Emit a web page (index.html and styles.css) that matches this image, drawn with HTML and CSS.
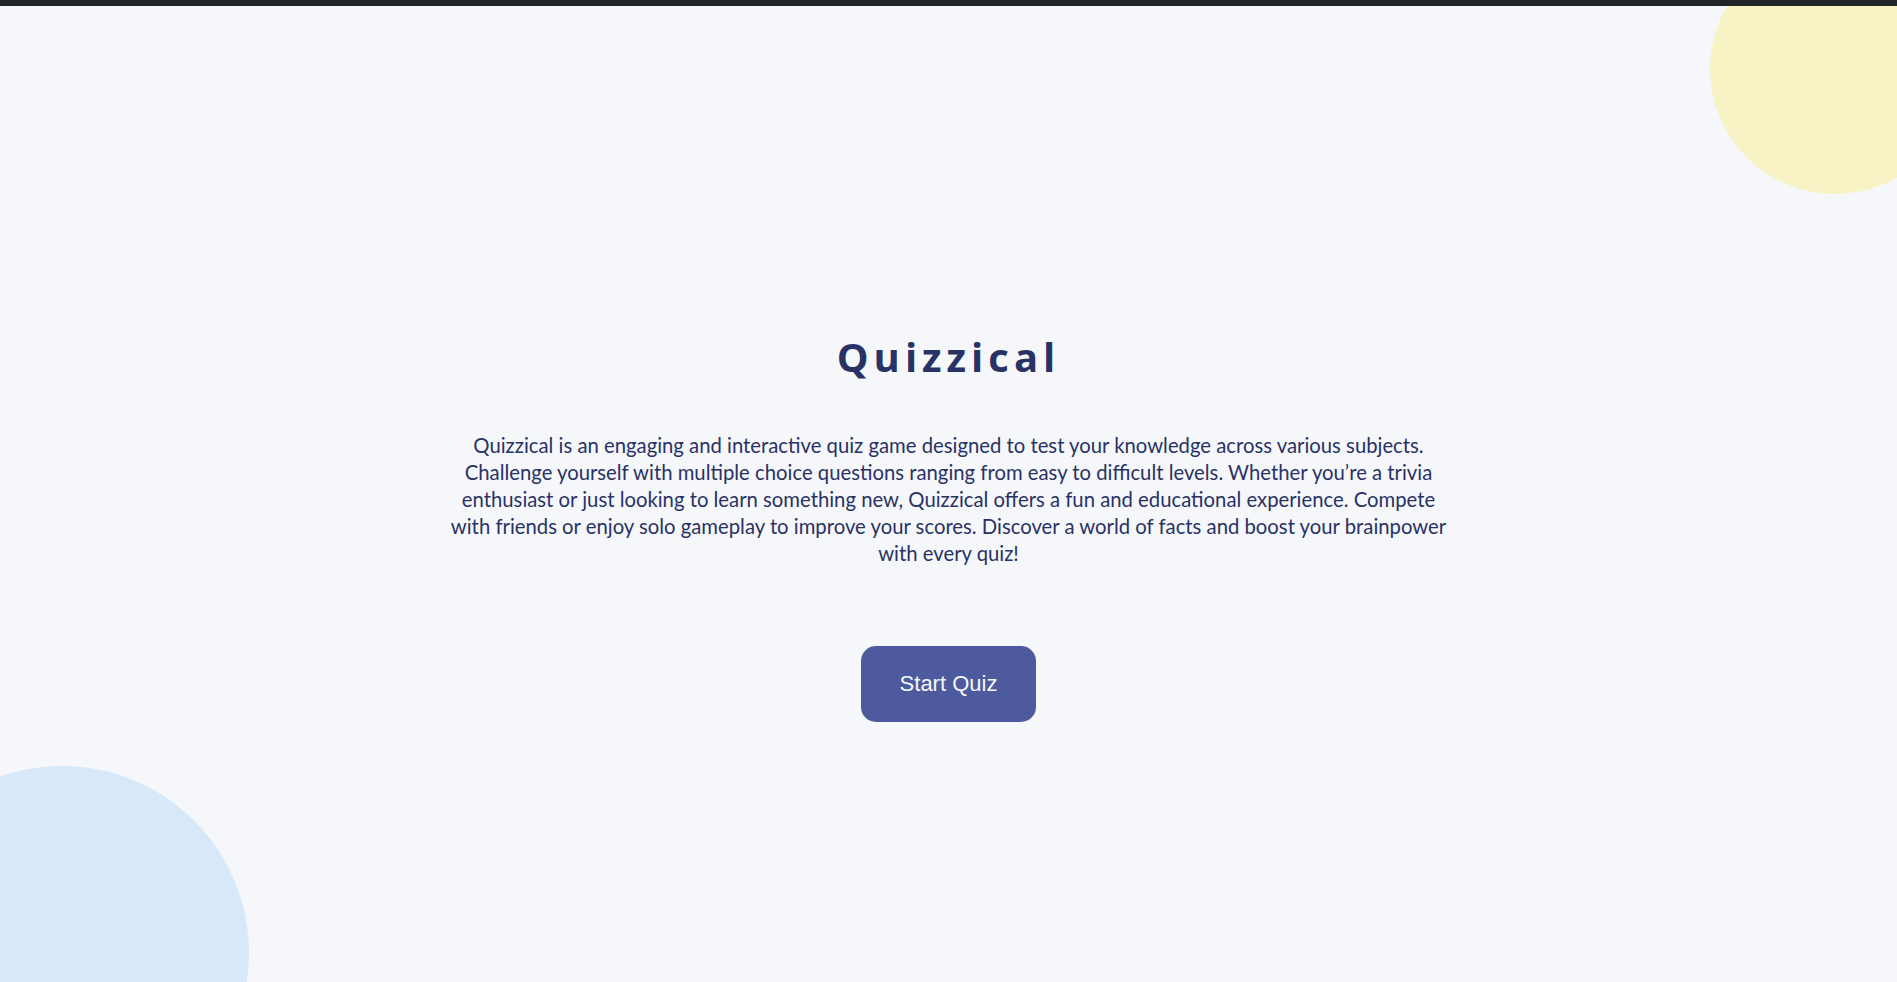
FILE: index.html
```html
<!DOCTYPE html>
<html lang="en">
<head>
<meta charset="utf-8">
<title>Quizzical</title>
<link rel="stylesheet" href="styles.css">
</head>
<body>
<div class="topbar"></div>
<main class="page">
  <div class="blob blob-yellow"></div>
  <div class="blob blob-blue"></div>
  <section class="intro">
    <h1 class="title">Quizzical</h1>
    <p class="desc">Quizzical is an engaging and interactive quiz game designed to test your knowledge across various subjects. Challenge yourself with multiple choice questions ranging from easy to difficult levels. Whether you’re a trivia enthusiast or just looking to learn something new, Quizzical offers a fun and educational experience. Compete with friends or enjoy solo gameplay to improve your scores. Discover a world of facts and boost your brainpower with every quiz!</p>
    <button class="start-btn" type="button">Start Quiz</button>
  </section>
</main>
</body>
</html>
```

FILE: styles.css
```css
* { box-sizing: border-box; }
html, body {
  margin: 0;
  padding: 0;
  height: 100%;
}
body {
  background: #F5F7FB;
  font-family: "Noto Sans", "Open Sans", sans-serif;
  overflow: hidden;
  display: flex;
  flex-direction: column;
}
.topbar {
  height: 6px;
  background: #202528;
  flex: none;
  position: relative;
  z-index: 2;
}
.page {
  position: relative;
  flex: 1;
  overflow: hidden;
  display: flex;
  justify-content: center;
}
.blob {
  position: absolute;
  border-radius: 50%;
}
.blob-yellow {
  width: 250px;
  height: 250px;
  background: #F8F3C4;
  top: -62px;
  right: -63px;
}
.blob-blue {
  width: 374px;
  height: 374px;
  background: #D7E9F9;
  top: 760px;
  left: -125px;
}
.intro {
  position: relative;
  z-index: 1;
  display: flex;
  flex-direction: column;
  align-items: center;
  padding-top: 327px;
  width: 1005px;
}
.title {
  margin: 0;
  font-family: "Open Sans", sans-serif;
  font-weight: 700;
  font-size: 40px;
  line-height: 48px;
  letter-spacing: 5px;
  color: #293264;
}
.desc {
  margin: 51px 0 0;
  font-family: "Lato", sans-serif;
  font-size: 20.3px;
  line-height: 27px;
  color: #293264;
  text-align: center;
}
.start-btn {
  margin-top: 79px;
  width: 175px;
  height: 76px;
  border: none;
  border-radius: 15px;
  background: #4D5B9E;
  color: #F5F7FB;
  font-family: "Liberation Sans", Arial, sans-serif;
  font-size: 22px;
  cursor: pointer;
}
```
